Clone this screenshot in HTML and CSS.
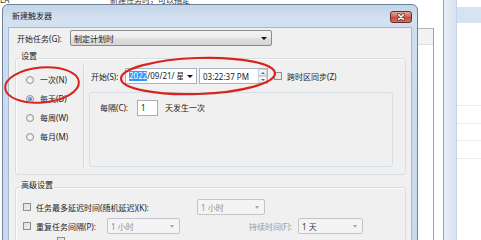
FILE: index.html
```html
<!DOCTYPE html>
<html lang="zh-CN">
<head>
    <meta charset="UTF-8">
    <meta name="viewport" content="width=device-width, initial-scale=1.0">
    <title>新建触发器</title>
    <link rel="stylesheet" href="styles.css">
</head>
<body>
<div class="desk">
    <!-- window behind the dialog -->
    <div class="bg-note">
        <span class="bg-icon">LA</span>
        <span class="bg-text">新建任务时，可以指定触发该任务的条件。</span>
    </div>

    <div class="bg-side">
        <div class="side-a">
            <div class="side-frame"><div class="side-cell"></div></div>
        </div>
        <div class="side-b"></div>
        <div class="side-c"></div>
        <div class="side-d">
            <div class="side-band"></div>
            <div class="side-rows">
                <div class="side-row"></div>
                <div class="side-row"></div>
                <div class="side-row"></div>
                <div class="side-row"></div>
            </div>
        </div>
    </div>

    <!-- the dialog -->
    <div class="dialog">
        <div class="titlebar">
            <span class="title">新建触发器</span>
            <span class="close">
                <svg width="22" height="12" viewBox="0 0 22 12">
                    <defs>
                        <linearGradient id="cg" x1="0" y1="0" x2="0" y2="1">
                            <stop offset="0" stop-color="#e9a99c"/>
                            <stop offset="0.45" stop-color="#d06a5c"/>
                            <stop offset="0.5" stop-color="#c4463a"/>
                            <stop offset="1" stop-color="#d27a60"/>
                        </linearGradient>
                    </defs>
                    <rect x="0.5" y="0.5" width="21" height="11" rx="2.5" fill="url(#cg)" stroke="#6e2a24"/>
                    <path d="M8.5 3.5 L13.5 8.5 M13.5 3.5 L8.5 8.5" stroke="#5a2a26" stroke-width="3" stroke-linecap="round"/>
                    <path d="M8.5 3.5 L13.5 8.5 M13.5 3.5 L8.5 8.5" stroke="#fff" stroke-width="1.6" stroke-linecap="round"/>
                </svg>
            </span>
        </div>

        <div class="client">
            <div class="task-row">
                <span class="task-label">开始任务(G):</span>
                <div class="combo combo-task"><span>制定计划时</span><i class="arrow"></i></div>
            </div>

            <fieldset class="group">
                <legend>设置</legend>
                <div class="settings">
                    <div class="freq">
                        <div class="radio-row"><span class="radio"></span>一次(N)</div>
                        <div class="radio-row"><span class="radio on"></span>每天(D)</div>
                        <div class="radio-row"><span class="radio"></span>每周(W)</div>
                        <div class="radio-row"><span class="radio"></span>每月(M)</div>
                    </div>
                    <div class="sep"></div>
                    <div class="detail">
                        <div class="start-row">
                            <span class="start-label">开始(S):</span>
                            <div class="date">
                                <span class="date-text"><span class="sel">2022</span>/09/21/ 星期三</span>
                                <i class="arrow"></i>
                            </div>
                            <div class="time">
                                <span class="time-text">03:22:37 PM</span>
                                <div class="spin"><b class="up"></b><b class="down"></b></div>
                            </div>
                            <span class="check"></span>
                            <span class="check-text">跨时区同步(Z)</span>
                        </div>
                        <div class="every-box">
                            <span class="every-label">每隔(C):</span>
                            <span class="num">1</span>
                            <span class="every-text">天发生一次</span>
                        </div>
                    </div>
                </div>
            </fieldset>

            <fieldset class="group group-adv">
                <legend>高级设置</legend>
                <div class="adv">
                    <div class="adv-row">
                        <span class="check"></span>
                        <span class="adv-label wide">任务最多延迟时间(随机延迟)(K):</span>
                        <div class="combo off w68"><span>1 小时</span><i class="arrow"></i></div>
                    </div>
                    <div class="adv-row">
                        <span class="check"></span>
                        <span class="adv-label">重复任务间隔(P):</span>
                        <div class="combo off w73"><span>1 小时</span><i class="arrow"></i></div>
                        <span class="dur-label">持续时间(F):</span>
                        <div class="combo off dark w65"><span>1 天</span><i class="arrow"></i></div>
                    </div>
                    <div class="adv-row indent">
                        <span class="check"></span>
                    </div>
                </div>
            </fieldset>
        </div>
    </div>

    <!-- red marks drawn over the screenshot -->
    <svg class="marks" width="481" height="240" viewBox="0 0 481 240">
        <ellipse cx="42" cy="85" rx="37" ry="17.5" transform="rotate(-5 42 85)" fill="none" stroke="#d9231d" stroke-width="2"/>
        <ellipse cx="198" cy="76" rx="77" ry="18" transform="rotate(-2 198 76)" fill="none" stroke="#d9231d" stroke-width="2.2"/>
    </svg>
</div>
</body>
</html>
```

FILE: styles.css
```css
* {
    box-sizing: border-box;
}

body {
    margin: 0;
    width: 481px;
    height: 240px;
    overflow: hidden;
    background-color: #fff;
    font-family: "Noto Sans", "Noto Sans CJK SC", sans-serif;
    font-size: 8px;
    color: #1c1c1c;
}

.desk {
    position: relative;
    width: 481px;
    height: 240px;
    overflow: hidden;
}

/* background window */
.bg-note {
    position: absolute;
    top: -5px;
    left: 0;
    display: flex;
    line-height: 10px;
    color: #333;
}

.bg-icon {
    width: 110px;
}

.bg-text {
    width: 80px;
    overflow: hidden;
    white-space: nowrap;
}

.bg-side {
    position: absolute;
    top: 0;
    left: 418px;
    width: 63px;
    height: 240px;
    display: flex;
}

.side-a {
    width: 16px;
    padding-top: 28px;
}

.side-frame {
    height: 100%;
    border-top: 1px solid #b4b4b4;
    border-right: 1px solid #a0a0a0;
}

.side-cell {
    height: 16px;
    background-color: #f2f2f2;
    border-bottom: 1px solid #dedede;
}

.side-b {
    width: 10px;
    border-right: 1px solid #a0a0a0;
}

.side-c {
    width: 13px;
    background: linear-gradient(90deg, #e6edf6, #d9e4f1);
    border-right: 1px solid #c4d3e5;
}

.side-d {
    flex: 1;
    padding-top: 7px;
}

.side-band {
    height: 16px;
    background-color: #d6e3f2;
}

.side-rows {
    padding-top: 82px;
}

.side-row {
    height: 17.5px;
    border-top: 1px solid #ececec;
}

/* dialog window */
.dialog {
    position: absolute;
    top: 4px;
    left: 2px;
    width: 416px;
    height: 250px;
    padding: 0 5px;
    border: 1px solid #6f8299;
    border-radius: 6px 6px 0 0;
    background: linear-gradient(#c3d5ea, #d3e1f1 14px, #cddcee 40px, #c8d9ec);
}

.titlebar {
    height: 22px;
    display: flex;
    align-items: flex-start;
}

.title {
    margin: 6px 0 0 4px;
    line-height: 10px;
    color: #1a2230;
}

.close {
    margin: 6px 0 0 auto;
    height: 12px;
}

.close svg {
    display: block;
}

.client {
    height: 230px;
    padding: 0 5px 0 6px;
    background-color: #f0f0f0;
    border: 1px solid #a8b9cd;
    border-bottom: 0;
}

.task-row {
    display: flex;
    align-items: center;
    padding-top: 2px;
}

.task-label {
    width: 55px;
    padding-left: 2px;
}

/* combo boxes */
.combo {
    height: 16px;
    display: flex;
    align-items: center;
    padding-left: 3px;
    border: 1px solid #8a8a8a;
    border-radius: 2px;
    background: linear-gradient(#f3f3f3, #ececec 50%, #dfdfdf 51%, #d6d6d6);
}

.combo-task {
    width: 202px;
}

.arrow {
    margin-left: auto;
    margin-right: 4px;
    width: 0;
    height: 0;
    border-left: 3px solid transparent;
    border-right: 3px solid transparent;
    border-top: 3px solid #111;
}

.combo.off {
    border-color: #c2c6c9;
    background: #f4f4f4;
    color: #8f8f8f;
}

.combo.off .arrow {
    border-top-color: #a8a8a8;
    border-left-width: 2.5px;
    border-right-width: 2.5px;
    margin-right: 5px;
}

.combo.dark {
    color: #3a3a3a;
}

.w68 { width: 68px; }
.w73 { width: 73px; }
.w65 { width: 65px; }

/* group boxes */
.group {
    margin: 5px 0 0;
    padding: 0;
    min-width: 0;
    border: 1px solid #d5dfe5;
    border-radius: 3px;
    box-shadow: inset 1px 1px 0 #fbfbfb;
}

.group legend {
    margin-left: 4px;
    padding: 0 1px 4px;
    line-height: 10px;
}

.settings {
    height: 109px;
    display: flex;
}

.freq {
    width: 67px;
    padding: 5px 0 0 10px;
}

.radio-row {
    height: 19px;
    display: flex;
    align-items: center;
    gap: 6px;
}

.radio {
    width: 8px;
    height: 8px;
    border-radius: 50%;
    border: 1px solid #929292;
    background: radial-gradient(circle at 50% 60%, #fdfdfd, #dcdcdc);
    display: flex;
    align-items: center;
    justify-content: center;
}

.radio.on::after {
    content: "";
    width: 4px;
    height: 4px;
    border-radius: 50%;
    background: radial-gradient(circle at 40% 35%, #7ab8f0, #1f5ea8);
}

.sep {
    width: 1px;
    margin-bottom: 7px;
    background-color: #d2d2d2;
    box-shadow: 1px 0 0 #fafafa;
}

.detail {
    flex: 1;
    padding: 3px 12px 0 5px;
}

.start-row {
    height: 16px;
    display: flex;
    align-items: center;
}

.start-label {
    width: 36px;
    padding-left: 2px;
}

.date {
    width: 72px;
    height: 16px;
    display: flex;
    align-items: center;
    padding-left: 3px;
    border: 1px solid #a4b4c6;
    background-color: #fff;
}

.date-text {
    width: 54px;
    overflow: hidden;
    white-space: nowrap;
    line-height: 10px;
}

.sel {
    background-color: #3399ff;
    color: #fff;
}

.date .arrow {
    margin-right: 3px;
}

.time {
    width: 69px;
    height: 16px;
    margin-left: 2px;
    display: flex;
    align-items: center;
    padding-left: 3px;
    border: 1px solid #abb4be;
    background-color: #fff;
}

.spin {
    margin-left: auto;
    width: 9px;
    height: 14px;
    display: flex;
    flex-direction: column;
}

.spin b {
    flex: 1;
    display: flex;
    align-items: center;
    justify-content: center;
    border: 1px solid #c8d0d8;
    background: linear-gradient(#fafafa, #e8edf2);
}

.spin b::after {
    content: "";
    border-left: 2px solid transparent;
    border-right: 2px solid transparent;
}

.spin .up::after {
    border-bottom: 2px solid #5b6b7c;
}

.spin .down::after {
    border-top: 2px solid #5b6b7c;
}

.check {
    width: 8px;
    height: 8px;
    flex: none;
    border: 1px solid #8f8f8f;
    background: linear-gradient(135deg, #d8d8d8, #f8f8f8);
    box-shadow: inset 0 0 0 1px #e6e6e6;
}

.start-row .check {
    margin-left: 6px;
}

.check-text {
    margin-left: 5px;
}

.every-box {
    height: 75px;
    margin-top: 8px;
    display: flex;
    align-items: flex-start;
    padding: 7px 0 0 10px;
    border: 1px solid #d5dfe5;
    border-radius: 3px;
    line-height: 16px;
}

.every-label {
    width: 37px;
}

.num {
    width: 21px;
    height: 16px;
    padding-left: 3px;
    border: 1px solid #abadb3;
    background-color: #fff;
    line-height: 14px;
}

.every-text {
    margin-left: 7px;
}

/* advanced settings */
.adv {
    height: 60px;
    padding: 5px 0 0 7px;
}

.adv-row {
    height: 16px;
    display: flex;
    align-items: center;
}

.adv-row + .adv-row {
    margin-top: 3px;
}

.adv-row.indent {
    padding-left: 34px;
    align-items: flex-start;
}

.adv-label {
    width: 71px;
    margin-left: 5px;
}

.adv-label.wide {
    width: 161px;
}

.dur-label {
    width: 118px;
    padding-right: 6px;
    text-align: right;
    color: #9a9a9a;
}

.marks {
    position: absolute;
    top: 0;
    left: 0;
    pointer-events: none;
}
```
